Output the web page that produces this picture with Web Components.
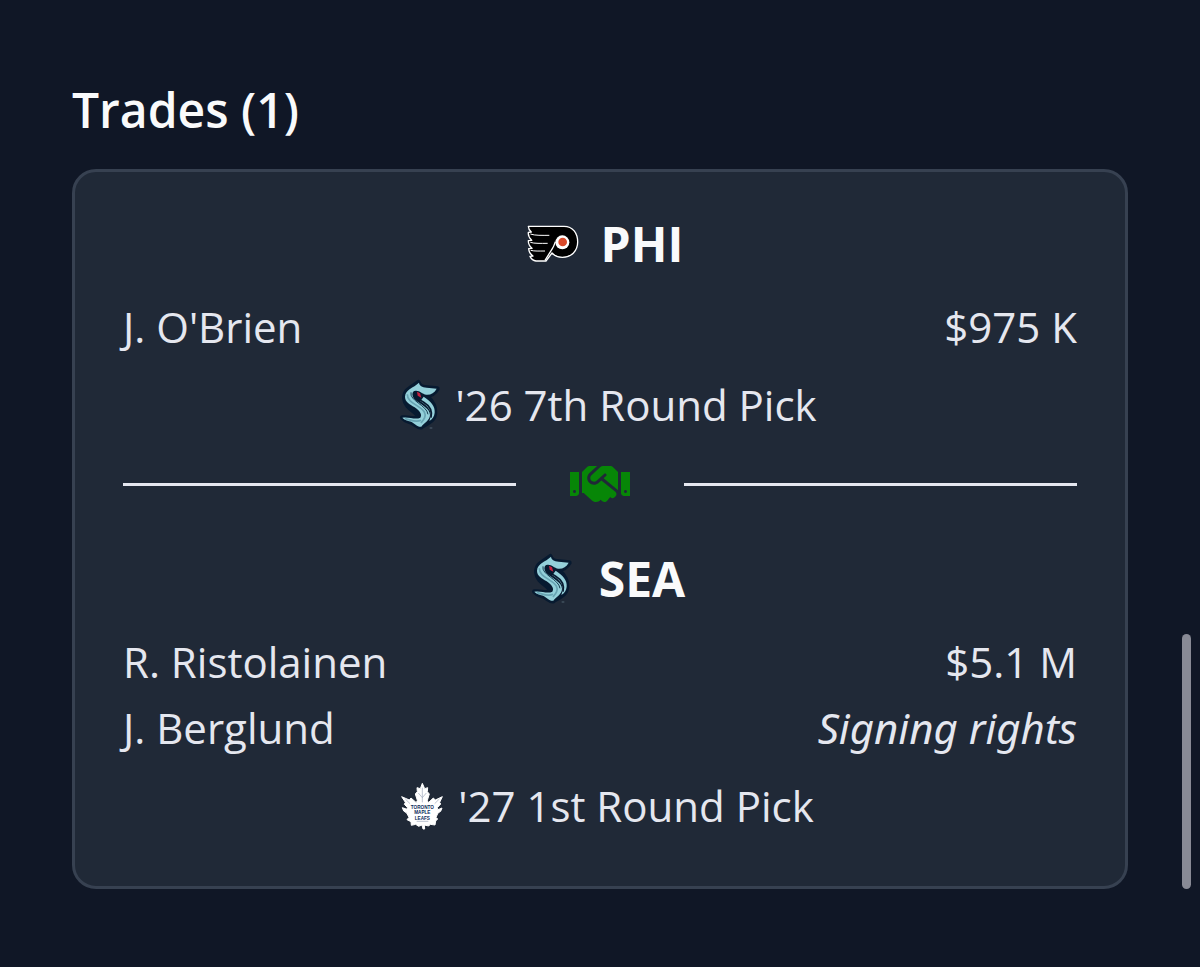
<!DOCTYPE html>
<html lang="en">
<head>
<meta charset="utf-8">
<meta name="viewport" content="width=device-width, initial-scale=1">
<title>Trades</title>
<style>
  body {
    margin: 0;
    min-height: 100vh;
    background-color: #101726;
    color: #e5e7ef;
    font-family: "Open Sans", "Noto Sans", sans-serif;
    font-size: 42px;
    line-height: 66px;
  }
  em {
    font-family: "Noto Sans", "Open Sans", sans-serif;
  }
</style>
</head>
<body>

<trades-section heading="Trades (1)">
  <trade-card>
    <trade-team team="PHI">
      <trade-player name="J. O'Brien">$975 K</trade-player>
      <trade-pick team="SEA">'26 7th Round Pick</trade-pick>
    </trade-team>
    <trade-divider></trade-divider>
    <trade-team team="SEA">
      <trade-player name="R. Ristolainen">$5.1 M</trade-player>
      <trade-player name="J. Berglund"><em>Signing rights</em></trade-player>
      <trade-pick team="TOR">'27 1st Round Pick</trade-pick>
    </trade-team>
  </trade-card>
</trades-section>
<scroll-thumb></scroll-thumb>

<script>
const logos = {
  PHI: `
    <svg viewBox="6 30 216 144" role="img" aria-label="PHI">
      <path d="M40 49 H147 C174 49 188 70 188 96 C188 124 168 142 142 142 C129 142 118 137 111 129 L93 153 H63 C55 152 49 147 45 139 L54 138 C46 133 42 126 41 116 L51 115 C44 109 40 101 40 92 L50 91 C43 84 39 76 40 67 L49 66 C43 61 40 56 40 49 Z"
        fill="#000" stroke="#fff" stroke-width="4" stroke-linejoin="round"/>
      <path d="M46 72 C60 77 82 76 103 76 M46 97 C58 101 78 100 98 100 M47 121 C59 124 72 123 90 123" fill="none" stroke="#fff" stroke-width="3"/>
      <path d="M90 151 L112 116 C118 106 119 101 121 95" fill="none" stroke="#fff" stroke-width="4"/>
      <circle cx="142" cy="97" r="21" fill="#fff"/>
      <circle cx="143" cy="96" r="13" fill="#d9492a"/>
    </svg>`,
  SEA: `
    <svg viewBox="-18 32 216 144" role="img" aria-label="SEA">
      <path d="M88 36 C90 46 100 51 115 52 L145 55 C137 70 126 75 112 75 C128 90 140 108 138 128 C137 150 118 157 97 170 C87 173 78 161 67 156 C57 152 48 152 40 142 C60 140 77 149 88 140 C84 122 49 116 46 84 C46 58 66 52 88 36 Z"
        fill="#071a30" stroke="#071a30" stroke-width="14" stroke-linejoin="round"/>
      <path d="M90 37 C91 46 99 51 113 52 L143 55 C136 68 125 74 112 73 C99 71 92 60 80 61 C67 62 68 78 78 88 C94 102 122 112 123 133 C123 150 105 157 97 169 C87 172 78 160 68 155 C57 150 48 151 40 142 C60 138 78 150 94 142 C101 132 91 121 77 111 C61 101 48 95 48 79 C49 57 73 53 90 37 Z" fill="#94d0da"/>
      <path d="M104 79 C125 93 139 107 137 127 C136 138 131 146 121 152 C133 126 119 108 94 93 Z" fill="#94d0da"/>
      <path d="M55 72 C54 98 93 104 106 125 C113 138 104 148 96 158 M48 145 C64 148 79 158 96 150" fill="none" stroke="#68a4b3" stroke-width="5"/>
      <path d="M66 66 C60 91 114 105 117 132" fill="none" stroke="#173b50" stroke-width="3"/>
      <path d="M78 63 C74 78 91 89 104 96 C121 106 131 120 126 142" fill="none" stroke="#071a30" stroke-width="5"/>
      <path d="M84 64 L93 69 L97 82 L86 76 Z" fill="#c7203f"/>
      <path d="M122 173 H130" stroke="#526574" stroke-width="3"/>
    </svg>`,
  TOR: `
    <svg viewBox="-12 21 216 144" role="img" aria-label="TOR">
      <path d="M97 25 L104 41 L113 38 L112 50 L118 57 L112 76 L115 83 L130 69 L136 75 L157 65 L149 82 L152 87 L142 98 L144 104 L156 99 L152 109 L144 114 L138 127 L143 132 L137 138 L135 150 L121 148 L116 153 L103 150 L104 162 L99 162 L96 150 L86 154 L77 148 L64 151 L63 140 L51 134 L57 127 L50 114 L41 108 L37 98 L51 103 L52 97 L43 88 L46 82 L35 65 L58 75 L63 69 L79 83 L82 76 L76 57 L82 50 L81 38 L91 41 Z"
        fill="#fff" stroke="#fff" stroke-width="3" stroke-linejoin="round"/>
      <path d="M97 38 V82 M97 68 L85 54 M97 68 L109 54 M60 86 L46 72 M134 86 L148 72 M80 139 H115" fill="none" stroke="#9aa5b8" stroke-width="2"/>
      <g fill="#0b2a5b" font-family="Liberation Sans, sans-serif" font-weight="700" font-size="14" text-anchor="middle">
        <text x="97" y="102">TORONTO</text>
        <text x="97" y="118">MAPLE</text>
        <text x="97" y="134">LEAFS</text>
      </g>
    </svg>`
};

// Section title and whatever cards it holds
class TradesSection extends HTMLElement {
  constructor() {
    super();
    this.attachShadow({mode: 'open'});
  }
  connectedCallback() {
    this.shadowRoot.innerHTML = `
      <style>
        :host {
          display: block;
          padding: 74px 72px;
        }
        h2 {
          margin: 0 0 23px;
          color: #f9fafb;
          font-size: 48px;
          font-weight: 600;
          line-height: 72px;
        }
      </style>
      <h2>${this.getAttribute('heading')}</h2>
      <slot></slot>
    `;
  }
}

class TradeCard extends HTMLElement {
  constructor() {
    super();
    this.attachShadow({mode: 'open'});
    this.shadowRoot.innerHTML = `
      <style>
        :host {
          display: block;
          padding: 36px 48px 47px;
          background-color: #202937;
          border: 3px solid #374151;
          border-radius: 24px;
        }
      </style>
      <slot></slot>
    `;
  }
}

class TeamLogo extends HTMLElement {
  constructor() {
    super();
    this.attachShadow({mode: 'open'});
  }
  connectedCallback() {
    this.shadowRoot.innerHTML = `
      <style>
        :host {
          display: block;
          width: 72px;
          height: 48px;
        }
        svg {
          display: block;
          width: 100%;
          height: 100%;
          overflow: visible;
        }
      </style>
      ${logos[this.getAttribute('team')]}
    `;
  }
}

// One side of the trade
class TradeTeam extends HTMLElement {
  constructor() {
    super();
    this.attachShadow({mode: 'open'});
  }
  connectedCallback() {
    const team = this.getAttribute('team');
    this.shadowRoot.innerHTML = `
      <style>
        :host {
          display: block;
        }
        header {
          display: flex;
          align-items: center;
          justify-content: center;
          gap: 12px;
          margin-bottom: 14px;
        }
        h3 {
          margin: 0;
          color: #f9fafb;
          font-size: 48px;
          font-weight: 700;
          line-height: 72px;
        }
      </style>
      <header>
        <team-logo team="${team}"></team-logo>
        <h3>${team}</h3>
      </header>
      <slot></slot>
    `;
  }
}

class TradePlayer extends HTMLElement {
  constructor() {
    super();
    this.attachShadow({mode: 'open'});
  }
  connectedCallback() {
    this.shadowRoot.innerHTML = `
      <style>
        :host {
          display: flex;
          justify-content: space-between;
          gap: 24px;
        }
      </style>
      <span>${this.getAttribute('name')}</span>
      <span><slot></slot></span>
    `;
  }
}

class TradePick extends HTMLElement {
  constructor() {
    super();
    this.attachShadow({mode: 'open'});
  }
  connectedCallback() {
    this.shadowRoot.innerHTML = `
      <style>
        :host {
          display: flex;
          align-items: center;
          justify-content: center;
          margin-top: 12px;
        }
      </style>
      <team-logo team="${this.getAttribute('team')}"></team-logo>
      <span><slot></slot></span>
    `;
  }
}

class TradeDivider extends HTMLElement {
  constructor() {
    super();
    this.attachShadow({mode: 'open'});
    this.shadowRoot.innerHTML = `
      <style>
        :host {
          display: flex;
          align-items: center;
          gap: 54px;
          margin: 22px 0 35px;
        }
        :host::before,
        :host::after {
          content: "";
          flex: 1;
          height: 3px;
          background-color: #e5e7ef;
        }
        svg {
          display: block;
          width: 60px;
          height: 48px;
          fill: #078607;
        }
      </style>
      <svg viewBox="0 0 640 512" aria-hidden="true">
        <path d="M434.700 64h-85.900c-8 0-15.700 3-21.600 8.400l-98.300 90c-.1.1-.2.3-.3.4-16.600 15.600-16.300 40.500-2.100 56 12.700 13.900 39.400 17.600 56.100 2.700.1-.1.3-.1.4-.2l79.900-73.200c6.500-5.900 16.700-5.500 22.600 1 6 6.500 5.500 16.600-1 22.600l-26.100 23.900L504 313.800c2.900 2.400 5.500 5 7.900 7.700V128l-54.600-54.600c-5.900-6-14.100-9.400-22.600-9.400zM544 128.200v223.900c0 17.700 14.300 32 32 32h64V128.200h-96zm48 223.900c-8.800 0-16-7.200-16-16s7.200-16 16-16 16 7.200 16 16-7.200 16-16 16zM0 384h64c17.700 0 32-14.300 32-32V128.200H0V384zm48-63.900c8.800 0 16 7.200 16 16s-7.200 16-16 16-16-7.200-16-16c0-8.900 7.200-16 16-16zm435.900 18.600L334.600 217.500l-30 27.500c-29.700 27.100-75.200 24.500-101.700-4.400-26.900-29.400-24.800-74.900 4.400-101.700L289.100 64h-83.800c-8.500 0-16.600 3.400-22.600 9.400L128 128v223.900h18.300l90.500 81.900c27.400 22.300 67.700 18.100 90-9.300l.2-.2 17.900 15.500c15.900 13 39.400 10.500 52.300-5.400l31.400-38.600 5.400 4.400c13.700 11.100 33.900 9.100 45-4.700l9.500-11.700c11.200-13.800 9.100-33.900-4.600-45.100z"/>
      </svg>
    `;
  }
}

// Overlay scroll indicator at the edge of the window
class ScrollThumb extends HTMLElement {
  constructor() {
    super();
    this.attachShadow({mode: 'open'});
    this.shadowRoot.innerHTML = `
      <style>
        :host {
          position: fixed;
          right: 9px;
          bottom: 78px;
          width: 9px;
          height: 255px;
          border-radius: 5px;
          background-color: #888a95;
        }
      </style>
    `;
  }
}

window.customElements.define('team-logo', TeamLogo);
window.customElements.define('trades-section', TradesSection);
window.customElements.define('trade-card', TradeCard);
window.customElements.define('trade-team', TradeTeam);
window.customElements.define('trade-player', TradePlayer);
window.customElements.define('trade-pick', TradePick);
window.customElements.define('trade-divider', TradeDivider);
window.customElements.define('scroll-thumb', ScrollThumb);
</script>
</body>
</html>
